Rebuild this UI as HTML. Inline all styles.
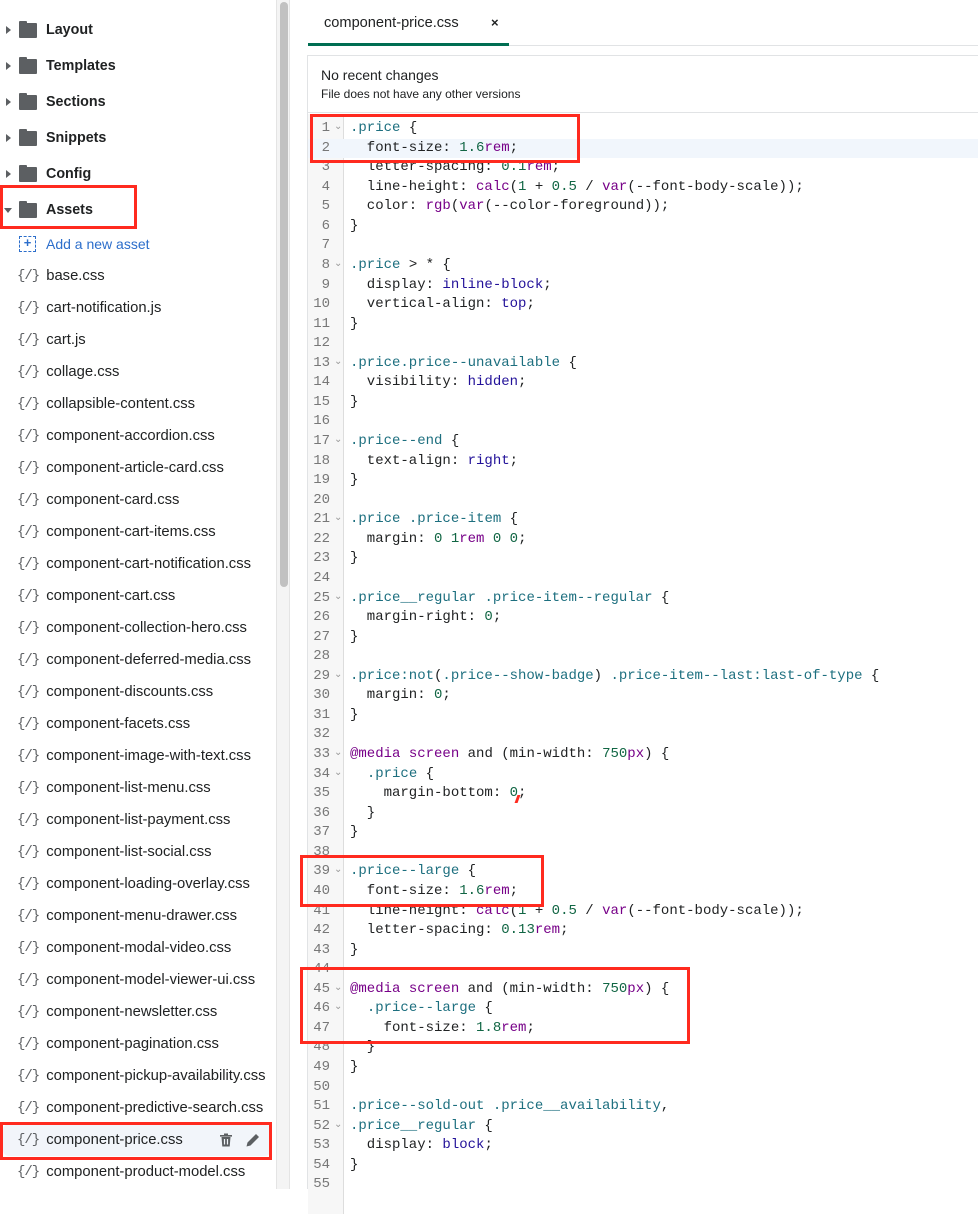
<!DOCTYPE html>
<html><head><meta charset="utf-8">
<style>
*{margin:0;padding:0;box-sizing:border-box}
body{width:978px;height:1189px;overflow:hidden;background:#fff;font-family:"Liberation Sans",sans-serif;color:#202223;position:relative}
.side{position:absolute;left:0;top:1px;width:276px;height:1189px;background:#fff}
.row{position:absolute;left:0;height:32px;display:flex;align-items:center;font-size:14.8px;white-space:nowrap}
.folder{font-size:14.3px}
.folder .tri{width:0;height:0;border-top:4px solid transparent;border-bottom:4px solid transparent;border-left:5px solid #5c5f62;margin-left:6px;margin-right:8px}
.folder .tri.open{border-left:4px solid transparent;border-right:4px solid transparent;border-top:5px solid #5c5f62;border-bottom:0;margin-left:4px;margin-right:7px}
.fold{width:18px;height:15px;background:#5c5f62;border-radius:1px;position:relative;margin-right:9px}
.fold:before{content:"";position:absolute;left:0;top:-2px;width:8px;height:3px;background:#5c5f62;border-radius:1px 1px 0 0}
.folder span.t{font-weight:bold;color:#202223}
.file .ic{font-family:"Liberation Mono",monospace;font-size:14px;color:#5c5f62;margin-left:17px;margin-right:7px;letter-spacing:-1px}
.scroll{position:absolute;left:276px;top:0;width:14px;height:1189px;background:#f4f4f4;border-left:1px solid #e4e4e4;border-right:1px solid #e4e4e4}
.thumb{position:absolute;left:3px;top:2px;width:8px;height:585px;background:#c1c1c1;border-radius:4px}
.tabbar{position:absolute;left:308px;top:0;right:0;height:46px;border-bottom:1px solid #e1e3e5}
.tab{position:absolute;left:0;top:0;width:201px;height:46px;border-bottom:3px solid #006e52;font-size:14.6px;padding:15px 0 0 16px}
.tab b{position:absolute;left:183px;top:15px;font-size:13px}
.panel{position:absolute;left:307px;top:55px;right:0;bottom:0;border-left:1px solid #e1e3e5;border-top:1px solid #e1e3e5}
.hdr{height:57px;border-bottom:1px solid #e1e3e5;padding:11px 0 0 13px}
.hdr .a{font-size:14px;color:#202223}
.hdr .b{font-size:12px;color:#202223;margin-top:4px}
.code{position:absolute;left:0;top:58px;right:0;font-family:"Liberation Mono",monospace;font-size:14px}
.gut{position:absolute;left:0;top:0;width:36px;height:1100px;background:#f7f7f7;border-right:1px solid #ddd}
#lines{position:absolute;left:0;right:0;top:5px}
.ln{position:relative;height:19.57px;line-height:19.57px;white-space:pre}
.ln .n{position:absolute;left:0;top:0;width:22px;text-align:right;color:#777;font-size:14px;line-height:19.57px}
.ln .f{position:absolute;left:26px;top:-1px;color:#999;font-size:10px}
.ln .c{position:absolute;left:42px;color:#202223}
.act{background:#f1f6fc}
.s{color:#1d6f7f}.k{color:#221199}.m{color:#116644}.u{color:#770088}.p{color:#770088}
.red{position:absolute;border:3px solid #ff2a1f}
</style></head><body>
<div class="side">
<div class="row folder" style="top:13px"><i class="tri"></i><i class="fold"></i><span class="t">Layout</span></div>
<div class="row folder" style="top:49px"><i class="tri"></i><i class="fold"></i><span class="t">Templates</span></div>
<div class="row folder" style="top:85px"><i class="tri"></i><i class="fold"></i><span class="t">Sections</span></div>
<div class="row folder" style="top:121px"><i class="tri"></i><i class="fold"></i><span class="t">Snippets</span></div>
<div class="row folder" style="top:157px"><i class="tri"></i><i class="fold"></i><span class="t">Config</span></div>
<div class="row folder" style="top:193px"><i class="tri open"></i><i class="fold"></i><span class="t">Assets</span></div>
<div class="row" style="top:227px"><span style="display:inline-block;width:17px;height:16px;border:1.5px dashed #2c6ecb;margin-left:19px;margin-right:10px;color:#2c6ecb;font-size:13px;line-height:12px;text-align:center;font-weight:bold">+</span><span style="color:#2c6ecb;font-size:14px">Add a new asset</span></div>
<div id="files"></div>
</div>
<div class="scroll"><div class="thumb"></div></div>
<div class="tabbar"><div class="tab">component-price.css<b>×</b></div></div>
<div class="panel">
<div class="hdr"><div class="a">No recent changes</div><div class="b">File does not have any other versions</div></div>
<div class="code"><div class="gut"></div><div id="lines"></div></div>
</div>
<div class="red" style="left:310px;top:114px;width:270px;height:49px"></div>
<div class="red" style="left:0;top:185px;width:137px;height:44px"></div>
<div class="red" style="left:300px;top:855px;width:244px;height:52px"></div>
<div class="red" style="left:300px;top:967px;width:390px;height:77px"></div>
<div class="red" style="left:0;top:1122px;width:272px;height:38px"></div>
<div style="position:absolute;left:516px;top:795px;width:3px;height:8px;background:#ff2a1f;transform:skew(-20deg)"></div>
<script>
var files=["base.css","cart-notification.js","cart.js","collage.css","collapsible-content.css","component-accordion.css","component-article-card.css","component-card.css","component-cart-items.css","component-cart-notification.css","component-cart.css","component-collection-hero.css","component-deferred-media.css","component-discounts.css","component-facets.css","component-image-with-text.css","component-list-menu.css","component-list-payment.css","component-list-social.css","component-loading-overlay.css","component-menu-drawer.css","component-modal-video.css","component-model-viewer-ui.css","component-newsletter.css","component-pagination.css","component-pickup-availability.css","component-predictive-search.css","component-price.css","component-product-model.css"];
var h="";files.forEach(function(f,i){var top=259+i*32;var sel=f=="component-price.css";
h+='<div class="row file" style="top:'+top+'px;'+(sel?'left:3px;width:268px;background:#f2f5fa;border-radius:6px;':'')+'"><span class="ic" style="'+(sel?'margin-left:14px':'')+'">{/}</span><span>'+f+'</span>'+(sel?'<svg style="position:absolute;left:215px;top:8px" width="16" height="16" viewBox="0 0 16 16"><path d="M2 3h12v1.6H2zM6 1.5h4v1.5H6zM3.5 5h9l-.8 9.5H4.3z" fill="#5c5f62"/><path d="M6.5 7v5.5M9.5 7v5.5" stroke="#f2f5fa" stroke-width="1.2"/></svg><svg style="position:absolute;left:242px;top:8px" width="16" height="16" viewBox="0 0 16 16"><path d="M1.5 14.5l1-4 8.5-8.5 3 3-8.5 8.5z" fill="#5c5f62"/></svg>':'')+'</div>';});
document.getElementById("files").innerHTML=h;
function S(t){return '<span class="s">'+t+'</span>'}function K(t){return '<span class="k">'+t+'</span>'}function M(t){return '<span class="m">'+t+'</span>'}function U(t){return '<span class="u">'+t+'</span>'}
var L=[
[S('.price')+' {',1],['  font-size: '+M('1.6')+U('rem')+';'],['  letter-spacing: '+M('0.1')+U('rem')+';'],['  line-height: '+U('calc')+'('+M('1')+' + '+M('0.5')+' / '+U('var')+'(--font-body-scale));'],['  color: '+U('rgb')+'('+U('var')+'(--color-foreground));'],['}'],[''],
[S('.price')+' &gt; * {',1],['  display: '+K('inline-block')+';'],['  vertical-align: '+K('top')+';'],['}'],[''],
[S('.price.price--unavailable')+' {',1],['  visibility: '+K('hidden')+';'],['}'],[''],
[S('.price--end')+' {',1],['  text-align: '+K('right')+';'],['}'],[''],
[S('.price')+' '+S('.price-item')+' {',1],['  margin: '+M('0')+' '+M('1')+U('rem')+' '+M('0')+' '+M('0')+';'],['}'],[''],
[S('.price__regular')+' '+S('.price-item--regular')+' {',1],['  margin-right: '+M('0')+';'],['}'],[''],
[S('.price:not')+'('+S('.price--show-badge')+') '+S('.price-item--last:last-of-type')+' {',1],['  margin: '+M('0')+';'],['}'],[''],
[U('@media')+' '+U('screen')+' and (min-width: '+M('750')+U('px')+') {',1],['  '+S('.price')+' {',1],['    margin-bottom: '+M('0')+';'],['  }'],['}'],[''],
[S('.price--large')+' {',1],['  font-size: '+M('1.6')+U('rem')+';'],['  line-height: '+U('calc')+'('+M('1')+' + '+M('0.5')+' / '+U('var')+'(--font-body-scale));'],['  letter-spacing: '+M('0.13')+U('rem')+';'],['}'],[''],
[U('@media')+' '+U('screen')+' and (min-width: '+M('750')+U('px')+') {',1],['  '+S('.price--large')+' {',1],['    font-size: '+M('1.8')+U('rem')+';'],['  }'],['}'],[''],
[S('.price--sold-out')+' '+S('.price__availability')+','],[S('.price__regular')+' {',1],['  display: '+K('block')+';'],['}'],['']];
var o="";L.forEach(function(l,i){o+='<div class="ln'+(i==1?' act':'')+'"><span class="n">'+(i+1)+'</span>'+(l[1]?'<span class="f">&#8964;</span>':'')+'<span class="c">'+l[0]+'</span></div>';});
document.getElementById("lines").innerHTML=o;
</script>
</body></html>
